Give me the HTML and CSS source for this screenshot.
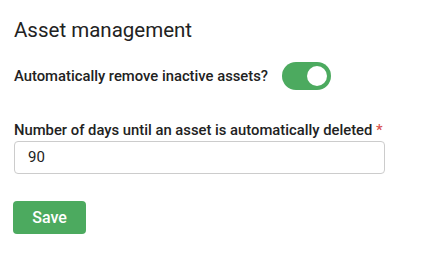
FILE: index.html
```html
<!DOCTYPE html>
<html>
<head>
<meta charset="utf-8">
<link rel="stylesheet" href="styles.css">
</head>
<body>
<div class="panel">
  <h2 class="title">Asset management</h2>
  <div class="toggle-row">
    <span class="label">Automatically remove inactive assets?</span>
    <span class="switch"><span class="knob"></span></span>
  </div>
  <div class="field">
    <label class="label">Number of days until an asset is automatically deleted <span class="req">*</span></label>
    <div class="input">90</div>
  </div>
  <button class="save">Save</button>
</div>
</body>
</html>
```
FILE: styles.css
```css
html, body { margin: 0; padding: 0; background: #fff; }
body { font-family: Roboto, "Noto Sans", sans-serif; color: #222; }
.panel { padding: 16px 14px 0 14px; display: flex; flex-direction: column; align-items: flex-start; }
.title { margin: 0; font-size: 20.5px; line-height: 28px; font-weight: 400; color: #222; }
.toggle-row { margin-top: 18px; display: flex; align-items: center; gap: 14px; }
.label { font-size: 14.8px; line-height: 20px; font-weight: 500; color: #222; }
.switch { width: 49px; height: 28px; border-radius: 14px; background: #4caa5f; display: flex; align-items: center; justify-content: flex-end; padding: 0 4px; box-sizing: border-box; }
.knob { width: 20px; height: 20px; border-radius: 50%; background: #fff; }
.field { margin-top: 30px; display: flex; flex-direction: column; }
.req { color: #d9534f; }
.input { margin-top: 1px; width: 371px; height: 33px; box-sizing: border-box; border: 1px solid #ccc; border-radius: 4px; padding: 0 13px; font-size: 15px; line-height: 31px; color: #222; }
.save { margin-top: 27px; margin-left: -1px; width: 73px; height: 33px; border: none; border-radius: 4px; background: #4caa5f; color: #fff; font-family: Roboto, sans-serif; font-size: 16px; font-weight: 500; padding: 0; }
```
